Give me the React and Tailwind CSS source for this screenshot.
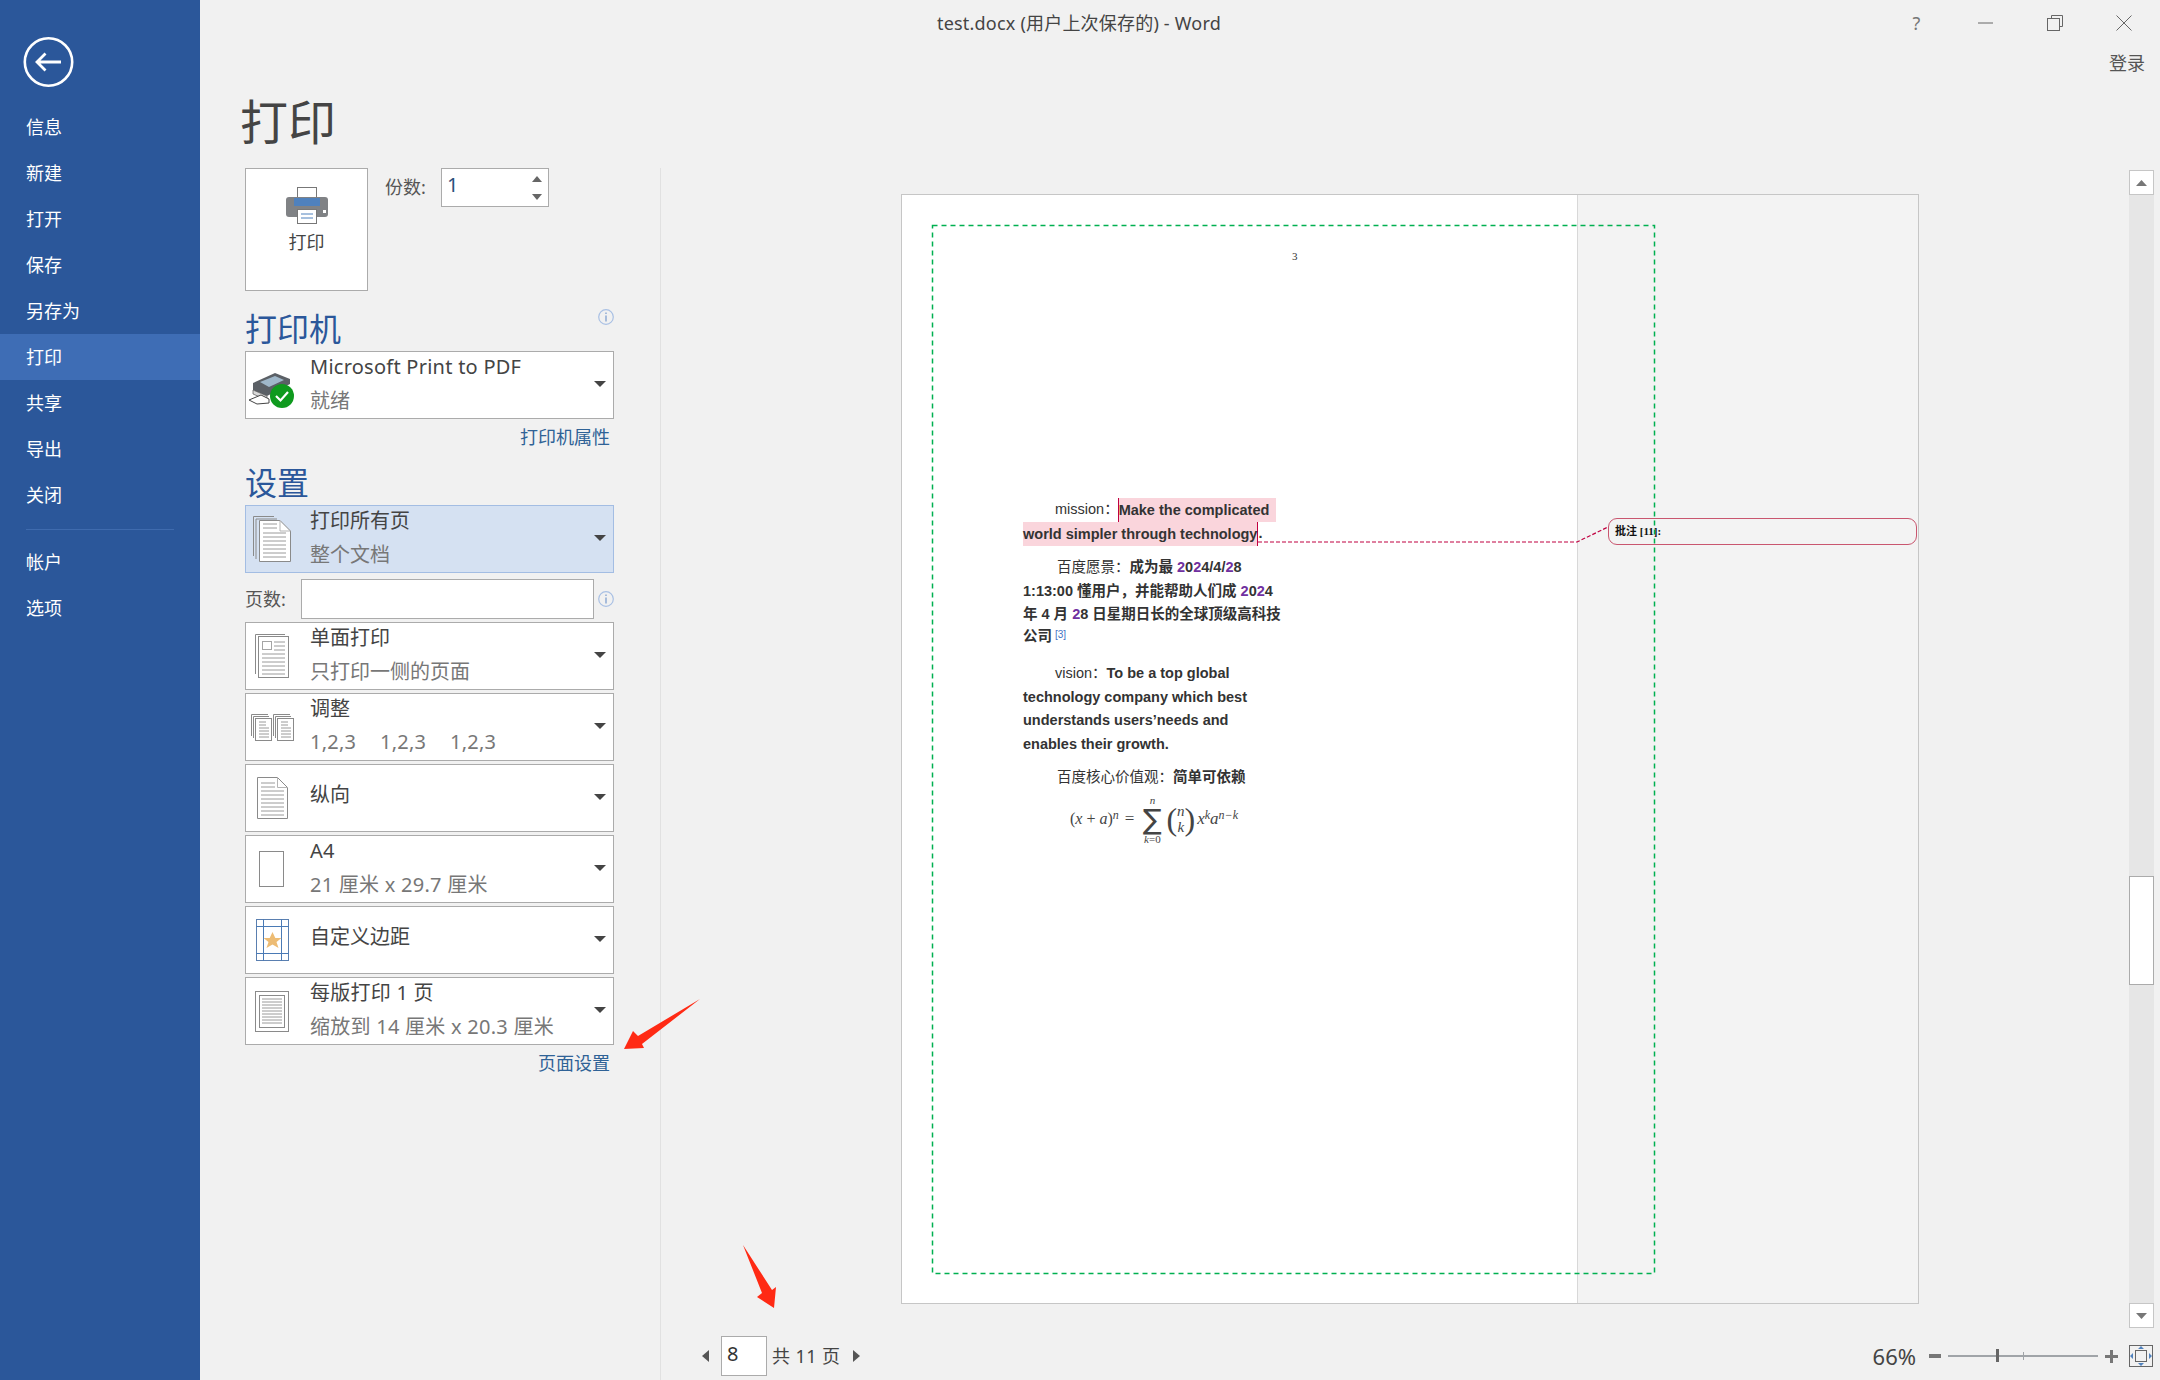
import React from "react";

const UI_FONT = "font-['Noto_Sans','Noto_Sans_CJK_SC',sans-serif]";
const DOC_FONT = "font-['Liberation_Sans','Noto_Sans_CJK_SC',sans-serif]";

const MENU = ["信息", "新建", "打开", "保存", "另存为", "打印", "共享", "导出", "关闭"];

const Lines = ({ x1, x2, ys, color = "#9a9a9a" }) => (
  <>
    {ys.map((y) => (
      <line key={y} x1={x1} x2={x2} y1={y} y2={y} stroke={color} strokeWidth="1" />
    ))}
  </>
);

const AllPagesIcon = () => (
  <svg width="38" height="46" viewBox="0 0 38 46" fill="none">
    <path d="M0.5 40V0.5H21M3 43V3H24" stroke="#8a8a8a" />
    <path d="M6.5 45.5V4.5H27L37.5 15V45.5Z" fill="#fff" stroke="#8a8a8a" />
    <path d="M27 4.5V15H37.5" stroke="#b5b5b5" />
    <Lines x1={10} x2={24} ys={[8, 12]} />
    <Lines x1={10} x2={33} ys={[17, 21, 25, 29, 33, 37, 41]} />
  </svg>
);

const OneSidedIcon = () => (
  <svg width="34" height="44" viewBox="0 0 34 44" fill="none">
    <path d="M0.5 40V0.5H30" stroke="#8a8a8a" />
    <rect x="3.5" y="2.5" width="30" height="41" fill="#fff" stroke="#8a8a8a" />
    <rect x="7.5" y="7.5" width="9" height="8" stroke="#a5a5a5" />
    <Lines x1={19} x2={30} ys={[8, 12, 16]} />
    <Lines x1={7} x2={30} ys={[20, 24, 28, 32, 36, 40]} />
  </svg>
);

const CollateIcon = () => (
  <svg width="43" height="27" viewBox="0 0 43 27" fill="none">
    {[0, 22].map((dx) => (
      <g key={dx} transform={`translate(${dx} 0)`}>
        <path d="M0.5 22V0.5H17M2.5 24V2.5H18" stroke="#8a8a8a" />
        <rect x="4.5" y="4.5" width="16" height="22" fill="#fff" stroke="#8a8a8a" />
        <Lines x1={8} x2={15} ys={[8, 11]} />
        <Lines x1={8} x2={18} ys={[14, 17, 20, 23]} />
      </g>
    ))}
  </svg>
);

const PortraitIcon = () => (
  <svg width="31" height="42" viewBox="0 0 31 42" fill="none">
    <path d="M0.5 41.5V0.5H20.5L30.5 10.5V41.5Z" fill="#fff" stroke="#8a8a8a" />
    <path d="M20.5 0.5V10.5H30.5" stroke="#b5b5b5" />
    <Lines x1={4} x2={18} ys={[6, 10]} />
    <Lines x1={4} x2={27} ys={[14, 18, 22, 26, 30, 34, 38]} />
  </svg>
);

const A4Icon = () => (
  <svg width="26" height="36" viewBox="0 0 26 36" fill="none">
    <rect x="0.5" y="0.5" width="24" height="35" fill="#fff" stroke="#8a8a8a" />
  </svg>
);

const MarginIcon = () => (
  <svg width="33" height="42" viewBox="0 0 33 42" fill="none">
    <rect x="0.5" y="0.5" width="32" height="41" fill="#fff" stroke="#5a7fb0" />
    <path d="M7.5 0V42M25.5 0V42M0 7.5H33M0 34.5H33" stroke="#4a7ab5" />
    <path d="M16.5 13L19.3 19H25.5L20.5 23L22.5 29L16.5 25.5L10.5 29L12.5 23L7.5 19H13.7Z" fill="#edbc74" />
  </svg>
);

const PerSheetIcon = () => (
  <svg width="34" height="41" viewBox="0 0 34 41" fill="none">
    <rect x="0.5" y="0.5" width="33" height="40" fill="#fff" stroke="#8a8a8a" />
    <rect x="4.5" y="4.5" width="25" height="32" stroke="#8a8a8a" />
    <Lines x1={7} x2={27} ys={[8, 11, 14, 17, 20, 23, 26, 29, 32]} />
  </svg>
);

const DeviceIcon = () => (
  <svg className="mt-[10px]" width="46" height="36" viewBox="0 0 46 36" fill="none">
    <path d="M4 11L26 1L41 7V12L18 24L4 18Z" fill="#5b6066" />
    <path d="M11 10L26 4L35 8L20 15Z" fill="#9fb7c9" />
    <path d="M4 18L18 24V28L4 22Z" fill="#d9d9d9" stroke="#555" strokeWidth="0.7" />
    <path d="M0 28L12 23L20 27V31L8 32Z" fill="#fff" stroke="#444" />
    <circle cx="33" cy="24" r="12" fill="#0f9a1e" />
    <path d="M27 24L31.5 28.5L39 20" stroke="#fff" strokeWidth="2.2" />
  </svg>
);

const PrinterIcon = () => (
  <svg width="42" height="37" viewBox="0 0 42 37" fill="none">
    <rect x="11.5" y="0.5" width="19" height="14" fill="#fff" stroke="#777" />
    <path d="M3 10H39A3 3 0 0 1 42 13V27A3 3 0 0 1 39 30H3A3 3 0 0 1 0 27V13A3 3 0 0 1 3 10Z" fill="#808285" />
    <rect x="8" y="11" width="26" height="8" fill="#4f81bd" />
    <rect x="37" y="23" width="3" height="3" fill="#fff" />
    <rect x="11.5" y="22.5" width="19" height="14" fill="#fff" stroke="#777" />
    <path d="M15 27H27M15 31H27" stroke="#4f81bd" />
  </svg>
);

const InfoIcon = () => (
  <svg width="16" height="16" viewBox="0 0 16 16" fill="none">
    <circle cx="8" cy="8" r="7.3" stroke="#a9c0e4" strokeWidth="1.2" />
    <path d="M8 6.5V12.5" stroke="#7f9fd0" strokeWidth="1.3" />
    <path d="M8 3.5V5" stroke="#7f9fd0" strokeWidth="1.3" />
  </svg>
);

const Caret = () => (
  <svg width="12" height="6" viewBox="0 0 12 6">
    <path d="M0 0H12L6 6Z" fill="#444" />
  </svg>
);

// latin runs are a bit wider in the original font
const widen = (text) => (typeof text === "string" && /[a-zA-Z0-9]/.test(text) ? "tracking-[0.25px]" : "");

const Dropdown = ({ icon, title, sub, active }) => (
  <div
    className={`flex h-[68px] w-[369px] items-stretch border ${
      active ? "border-[#a3bde3] bg-[#d5e1f2]" : "border-[#ababab] bg-white"
    }`}
  >
    <div className="flex w-[64px] shrink-0 items-center justify-center pr-[12px]">{icon}</div>
    <div className={`flex flex-1 flex-col ${sub ? "" : "justify-center pb-[8px]"}`}>
      <div className={`h-[29px] text-[20px] leading-[29px] whitespace-nowrap text-[#444] ${widen(title)}`}>{title}</div>
      {sub && (
        <div className={`mt-[5px] h-[29px] text-[20px] leading-[29px] whitespace-pre text-[#777] ${widen(sub)}`}>{sub}</div>
      )}
    </div>
    <div className="flex w-[28px] shrink-0 items-center pl-[9px] pb-[2px]">
      <Caret />
    </div>
  </div>
);

const CollateOrder = () => (
  <div className="-mt-[1px] flex tracking-[0.25px]">
    <span className="w-[70px]">1,2,3</span>
    <span className="w-[70px]">1,2,3</span>
    <span>1,2,3</span>
  </div>
);

const P = ({ children }) => <span className="text-[#7030a0]">{children}</span>;

const DocLine = ({ h = "h-[24px]", pad = "", children }) => (
  <div className={`${h} ${pad} flex items-center text-[14.5px] font-bold whitespace-pre text-[#333]`}>{children}</div>
);

const Light = ({ children }) => <span className="font-normal">{children}</span>;

const Formula = () => (
  <div className="mt-[3px] flex h-[52px] items-center pl-[47px] font-['Liberation_Serif',serif] text-[16px] text-[#444] italic">
    <span>
      <span className="not-italic">(</span>x<span className="not-italic"> + </span>a<span className="not-italic">)</span>
    </span>
    <span className="mb-[8px] text-[12px]">n</span>
    <span className="mx-[6px] text-[17px] not-italic">=</span>
    <div className="flex w-[24px] flex-col items-center text-[11px] leading-[10px]">
      <span>n</span>
      <span className="font-['DejaVu_Sans',sans-serif] text-[28px] leading-[29px] not-italic">∑</span>
      <span>k<span className="not-italic">=0</span></span>
    </div>
    <span className="ml-[2px] text-[32px] leading-[34px] font-light not-italic">(</span>
    <div className="flex flex-col items-center text-[15px] leading-[16px]">
      <span>n</span>
      <span>k</span>
    </div>
    <span className="text-[32px] leading-[34px] font-light not-italic">)</span>
    <span className="ml-[2px] text-[17px]">x</span>
    <span className="mb-[8px] text-[12px]">k</span>
    <span className="text-[17px]">a</span>
    <span className="mb-[8px] text-[12px]">n−k</span>
  </div>
);

const PageSheet = () => (
  <div className="relative mt-[26px] ml-[240px] flex h-[1110px] w-[1018px] shrink-0 border border-[#c6c6c6]">
    <div className={`h-full w-[675px] shrink-0 bg-white pt-[53px] pl-[121px] ${DOC_FONT}`}>
      <div className="h-[16px] pl-[269px] font-['Liberation_Serif',serif] text-[11px] leading-[16px] text-[#333]">3</div>
      <div className="mt-[234px]">
        <DocLine pad="pl-[32px]">
          <Light>mission：</Light>
          <span className="ml-[-1px] h-[24px] border-l border-[#c00040] bg-[#fad5dc] pr-[7px] leading-[24px]">Make the complicated</span>
        </DocLine>
        <DocLine>
          <span className="h-[24px] border-r border-[#c00040] bg-[#fad5dc] leading-[24px]">world simpler through technology</span>
          <span>.</span>
        </DocLine>
        <DocLine h="h-[25px]" pad="mt-[9px] pl-[34px]">
          <Light>百度愿景：</Light>
          成为最 <P>2</P>0<P>2</P>4/4/<P>2</P>8
        </DocLine>
        <DocLine>
          1:13:00 懂用户，并能帮助人们成 <P>2</P>0<P>2</P>4
        </DocLine>
        <DocLine h="h-[22px]">
          年 4 月 <P>2</P>8 日星期日长的全球顶级高科技
        </DocLine>
        <DocLine h="h-[22px]">
          公司<span className="mb-[6px] ml-[3px] text-[10px] font-normal text-[#4472c4]">[3]</span>
        </DocLine>
        <DocLine h="h-[25px]" pad="mt-[13px] pl-[32px]">
          <Light>vision：</Light>
          To be a top global
        </DocLine>
        <DocLine h="h-[23px]">technology company which best</DocLine>
        <DocLine>understands users’needs and</DocLine>
        <DocLine>enables their growth.</DocLine>
        <DocLine pad="mt-[9px] pl-[34px]">
          <Light>百度核心价值观：</Light>
          简单可依赖
        </DocLine>
        <Formula />
      </div>
    </div>
    <div className="flex-1 border-l border-[#d8d8d8] bg-[#f3f3f3] pt-[323px] pl-[30px]">
      <div className="flex h-[27px] w-[309px] items-center rounded-[9px] border border-[#c9566f] pl-[6px] font-['Liberation_Serif','Noto_Sans_CJK_SC',serif] text-[11px] font-bold text-[#111]">
        批注 [11]:
      </div>
    </div>
    {/* margin guide and comment connector */}
    <svg className="pointer-events-none absolute top-0 left-0" width="1016" height="1108" fill="none">
      <rect x="30.5" y="30.5" width="722" height="1048" stroke="#00b050" strokeWidth="1.5" strokeDasharray="5 4" />
      <path d="M356 347H675L706 332" stroke="#c00040" strokeWidth="1.2" strokeDasharray="4 2" />
    </svg>
  </div>
);

const Scrollbar = () => (
  <div className="mt-[2px] ml-[210px] flex h-[1158px] w-[25px] shrink-0 flex-col bg-[#e6e6e6]">
    <div className="flex h-[25px] items-center justify-center border border-[#c6c6c6] bg-white">
      <svg width="11" height="6" viewBox="0 0 11 6"><path d="M0 6H11L5.5 0Z" fill="#777" /></svg>
    </div>
    <div className="mt-[681px] h-[109px] border border-[#ababab] bg-white" />
    <div className="mt-auto flex h-[25px] items-center justify-center border border-[#c6c6c6] bg-white">
      <svg width="11" height="6" viewBox="0 0 11 6"><path d="M0 0H11L5.5 6Z" fill="#777" /></svg>
    </div>
  </div>
);

const Pager = () => (
  <div className="mt-[8px] flex h-[40px] items-center pl-[41px] text-[#444]">
    <svg width="7" height="12" viewBox="0 0 7 12"><path d="M7 0V12L0 6Z" fill="#555" /></svg>
    <div className="ml-[12px] h-[40px] w-[46px] border border-[#ababab] bg-white pl-[5px] text-[20px] leading-[33px] text-[#333]">8</div>
    <span className="ml-[5px] text-[18px] tracking-[0.4px] whitespace-pre">共 11 页</span>
    <svg className="ml-[13px]" width="7" height="12" viewBox="0 0 7 12"><path d="M0 0V12L7 6Z" fill="#555" /></svg>
    <span className="ml-auto text-[22px]">66%</span>
    <div className="ml-[13px] h-[4px] w-[12px] bg-[#777]" />
    <div className="relative mx-[7px] h-[2px] w-[150px] bg-[#a0a4a8]">
      <div className="absolute top-[-6px] left-[48px] h-[13px] w-[3px] bg-[#666]" />
      <div className="absolute top-[-3px] left-[75px] h-[8px] w-px bg-[#a0a4a8]" />
    </div>
    <svg width="13" height="13" viewBox="0 0 13 13"><path d="M5 0H8V5H13V8H8V13H5V8H0V5H5Z" fill="#777" /></svg>
    <div className="mr-[7px] ml-[11px] flex h-[22px] w-[24px] items-center justify-center border border-[#666]">
      <svg width="22" height="20" viewBox="0 0 22 20" fill="none">
        <rect x="5.5" y="4.5" width="11" height="11" stroke="#666" />
        <path d="M11 0L14 3H8ZM11 20L14 17H8ZM0 10L3 7V13ZM22 10L19 7V13Z" fill="#4f81bd" />
      </svg>
    </div>
  </div>
);

export default function App() {
  return (
    <div className={`relative flex h-[1380px] w-[2160px] overflow-hidden bg-[#f1f1f1] ${UI_FONT}`}>
      <aside className="w-[200px] shrink-0 bg-[#2b579a] pt-[37px] text-[18px] text-white">
        <svg className="mb-[17px] ml-[23px]" width="51" height="50" viewBox="0 0 51 50" fill="none">
          <circle cx="25.5" cy="25" r="23.7" stroke="#fff" strokeWidth="2.6" />
          <path d="M38 25H14M22.5 16.5L14 25L22.5 33.5" stroke="#fff" strokeWidth="2.8" />
        </svg>
        {MENU.map((item) => (
          <div
            key={item}
            className={`flex h-[46px] items-center pl-[26px] ${item === "打印" ? "bg-[#3e6db5]" : ""}`}
          >
            {item}
          </div>
        ))}
        <div className="mt-[11px] mb-[9px] ml-[26px] h-px w-[148px] bg-[#3f6bae]" />
        {["帐户", "选项"].map((item) => (
          <div key={item} className="flex h-[46px] items-center pl-[26px]">{item}</div>
        ))}
      </aside>

      <main className="flex flex-1 flex-col">
        <header className="flex h-[46px] items-center pl-[737px] text-[18px] text-[#444]">
          <span className="tracking-[0.2px] whitespace-pre">test.docx (用户上次保存的) - Word</span>
          <div className="mr-[2px] ml-auto flex">
            <div className="flex w-[69px] justify-center text-[#777]">?</div>
            <div className="flex w-[69px] items-center justify-center">
              <svg width="15" height="2"><path d="M0 1H15" stroke="#666" /></svg>
            </div>
            <div className="flex w-[69px] items-center justify-center">
              <svg width="16" height="16" viewBox="0 0 16 16" fill="none">
                <path d="M4.5 3V0.5H15.5V11.5H12.5" stroke="#666" />
                <rect x="0.5" y="3.5" width="12" height="12" stroke="#666" />
              </svg>
            </div>
            <div className="flex w-[69px] items-center justify-center">
              <svg width="16" height="16" viewBox="0 0 16 16" fill="none">
                <path d="M0.5 0.5L15.5 15.5M15.5 0.5L0.5 15.5" stroke="#666" />
              </svg>
            </div>
          </div>
        </header>

        <div className="flex h-[122px] justify-between pl-[40px]">
          <h1 className="mt-[51px] h-[50px] text-[48px] leading-[50px] text-[#444]">打印</h1>
          <div className="mt-[5px] mr-[15px] text-[18px] leading-[24px] text-[#555]">登录</div>
        </div>

        <div className="flex flex-1">
          <section className="w-[461px] shrink-0 border-r border-[#e1e1e1] pl-[45px]">
            <div className="flex">
              <div className="flex h-[123px] w-[123px] flex-col items-center border border-[#ababab] bg-white pt-[18px] text-[18px] text-[#444]">
                <PrinterIcon />
                <span className="mt-[5px] leading-[26px]">打印</span>
              </div>
              <span className="ml-[17px] flex h-[39px] w-[56px] items-center text-[18px] text-[#555]">份数:</span>
              <div className="flex h-[39px] w-[108px] items-start justify-between border border-[#ababab] bg-white pt-[4px] pr-[6px] pl-[5px] text-[20px] leading-[24px] text-[#2a4f7c]">
                1
                <div className="flex flex-col gap-[12px] pt-[3px]">
                  <svg width="10" height="6" viewBox="0 0 10 6"><path d="M0 6H10L5 0Z" fill="#666" /></svg>
                  <svg width="10" height="6" viewBox="0 0 10 6"><path d="M0 0H10L5 6Z" fill="#666" /></svg>
                </div>
              </div>
            </div>

            <div className="mt-[18px] flex h-[40px] w-[369px] justify-between">
              <h2 className="text-[32px] leading-[40px] text-[#2b579a]">打印机</h2>
              <InfoIcon />
            </div>
            <div className="mt-[2px]">
              <Dropdown icon={<DeviceIcon />} title="Microsoft Print to PDF" sub="就绪" />
            </div>
            <div className="flex h-[36px] w-[365px] items-center justify-end text-[18px] text-[#2f6296]">打印机属性</div>

            <h2 className="mt-[8px] h-[40px] text-[32px] leading-[40px] text-[#2b579a]">设置</h2>
            <div className="mt-[2px]">
              <Dropdown active icon={<AllPagesIcon />} title="打印所有页" sub="整个文档" />
            </div>
            <div className="mt-[6px] flex h-[40px] w-[369px] items-center">
              <span className="w-[56px] text-[18px] text-[#555]">页数:</span>
              <div className="h-[40px] w-[293px] border border-[#ababab] bg-white" />
              <div className="ml-[4px]"><InfoIcon /></div>
            </div>
            <div className="mt-[3px] flex flex-col gap-[3px]">
              <Dropdown icon={<OneSidedIcon />} title="单面打印" sub="只打印一侧的页面" />
              <Dropdown icon={<CollateIcon />} title="调整" sub={<CollateOrder />} />
              <Dropdown icon={<PortraitIcon />} title="纵向" />
              <Dropdown icon={<A4Icon />} title="A4" sub="21 厘米 x 29.7 厘米" />
              <Dropdown icon={<MarginIcon />} title="自定义边距" />
              <Dropdown icon={<PerSheetIcon />} title="每版打印 1 页" sub="缩放到 14 厘米 x 20.3 厘米" />
            </div>
            <div className="flex h-[36px] w-[365px] items-center justify-end text-[18px] text-[#2f6296]">页面设置</div>
          </section>

          <section className="flex flex-1 flex-col">
            <div className="flex h-[1160px]">
              <PageSheet />
              <Scrollbar />
            </div>
            <Pager />
          </section>
        </div>
      </main>

      {/* red annotation arrows drawn over the screenshot */}
      <svg className="pointer-events-none absolute top-0 left-0" width="2160" height="1380">
        <path d="M700 999L638 1036L633 1031L624 1049L644 1048L642 1044Z" fill="#ff2a14" />
        <path d="M743 1245L762 1293L757 1297L774 1308L776 1287L772 1290Z" fill="#ff2a14" />
      </svg>
    </div>
  );
}
